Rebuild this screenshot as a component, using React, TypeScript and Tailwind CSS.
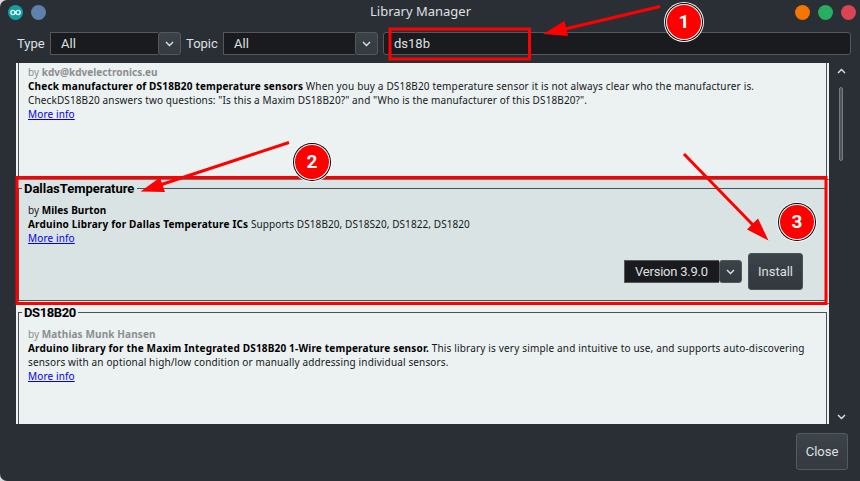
import React from "react";

const NOTO = "font-['Noto_Sans',sans-serif]";
const ROBOTO = "font-[Roboto,sans-serif]";

function Chevron({ up = false }: { up?: boolean }) {
  return (
    <svg width="9" height="6" viewBox="0 0 9 6" fill="none" stroke="#dfe3e5" strokeWidth="1.4">
      <path d={up ? "M1 5 4.5 1.5 8 5" : "M1 1 4.5 4.5 8 1"} />
    </svg>
  );
}

function Select({ value, box, pad }: { value: string; box: string; pad: string }) {
  return (
    <div className={`flex h-[23px] ${box}`}>
      <div className={`flex min-w-0 flex-1 items-center border border-r-0 border-[#54585b] bg-[#1a1b1e] text-[13px] text-[#dfe0e1] ${pad}`}>
        {value}
      </div>
      <div className="flex w-[23px] items-center justify-center rounded-[3px] border border-[#54585b] bg-linear-to-b from-[#3b4248] to-[#343b40]">
        <Chevron />
      </div>
    </div>
  );
}

function MoreInfo() {
  return (
    <div>
      <a className="tracking-[0.13px] text-[#0000ee] underline underline-offset-[1px]">More info</a>
    </div>
  );
}

function Entry({ title, shade, titleWidth, children }: { title: string; shade: string; titleWidth: string; children: React.ReactNode }) {
  return (
    <div className="h-full border border-[#4c5052] pl-[9px]">
      <div className={`-mt-[8px] -ml-[6px] h-4 whitespace-nowrap pl-[2px] text-[13px] leading-4 font-bold text-black ${titleWidth} ${shade} ${ROBOTO}`}>
        {title}
      </div>
      <div className="h-[6px]" />
      {children}
    </div>
  );
}

function Badge({ n, place }: { n: number; place: string }) {
  return (
    <div className={`absolute size-[40px] rounded-full bg-[#f4f4f4] p-px ${place}`}>
      <div className="size-full rounded-full bg-black p-px">
        <div className="size-full rounded-full bg-white p-px">
          <div className={`flex size-full items-center justify-center rounded-full bg-[#fe0000] text-[19px] font-bold text-white ${ROBOTO}`}>{n}</div>
        </div>
      </div>
    </div>
  );
}

export default function App() {
  return (
    <div className="h-[481px] w-[860px] bg-[#d9dcdd]">
      <div className={`relative flex h-full flex-col overflow-hidden rounded-l-[7px] bg-[#2a2e35] text-[13px] text-[#dfe0e1] ${ROBOTO}`}>
        <div className="flex h-8 shrink-0 items-center pr-[4px] pb-[7px] pl-[8px]">
          <div className="flex w-[54px] items-center gap-2">
            <svg width="15" height="15" viewBox="0 0 15 15">
              <circle cx="7.5" cy="7.5" r="7.5" fill="#11a0a5" />
              <g fill="none" stroke="#e9fbfb" strokeWidth="1.3">
                <circle cx="4.9" cy="7.5" r="2.1" />
                <circle cx="10.1" cy="7.5" r="2.1" />
                <path d="M6.5 6.2 8.5 8.8M6.5 8.8 8.5 6.2" />
              </g>
            </svg>
            <div className="size-[15px] rounded-full bg-[#5d80ad]" />
          </div>
          <div className={`flex-1 pr-[16px] pb-[2px] text-center text-[13px] text-[#dfe0e1] ${NOTO}`}>Library Manager</div>
          <div className="flex gap-2">
            <div className="size-[15px] rounded-full bg-[#f67400]" />
            <div className="size-[15px] rounded-full bg-[#27ae60]" />
            <div className="size-[15px] rounded-full bg-[#da4453]" />
          </div>
        </div>

        <div className="flex h-[31px] shrink-0 items-start pl-[17px]">
          <span className="w-[33px] leading-[23px]">Type</span>
          <Select value="All" box="w-[131px]" pad="pl-[10px]" />
          <span className="w-[42px] pl-[5px] leading-[23px]">Topic</span>
          <Select value="All" box="w-[155px]" pad="pl-[10px]" />
          <div className="ml-[5px] flex h-[23px] w-[468px] items-center rounded-[3px] border border-[#54585b] bg-[#1a1b1e] pl-[10px]">
            ds18b
          </div>
        </div>

        <div className="flex h-[361px] shrink-0 pl-4">
          <div className={`w-[813px] overflow-hidden bg-[#ecf1f1] text-[10px] leading-[14px] whitespace-nowrap text-[#15181a] ${NOTO}`}>
            <div className="h-[116px] pr-[2px] pl-[2px]">
              <div className="h-full border-x border-[#4c5052] pt-[2px] pl-[9px]">
                <div className="text-[#8b8e8f]">by <b className="tracking-[0.03px]">kdv@kdvelectronics.eu</b></div>
                <div className="tracking-[0.165px]"><b className="text-black">Check manufacturer of DS18B20 temperature sensors</b> When you buy a DS18B20 temperature sensor it is not always clear who the manufacturer is.</div>
                <div className="tracking-[0.12px]">CheckDS18B20 answers two questions: "Is this a Maxim DS18B20?" and "Who is the manufacturer of this DS18B20?".</div>
                <MoreInfo />
              </div>
            </div>

            <div className="h-[125px] border-y border-[#737779] bg-[#dae3e3] px-[2px] pt-[8px] pb-[2px]">
              <Entry title="DallasTemperature" shade="bg-[#dae3e3]" titleWidth="w-[115px] tracking-[-0.03px]">
                <div>by <b className="tracking-[0.08px] text-black">Miles Burton</b></div>
                <div className="tracking-[0.08px]"><b className="tracking-[0.18px] text-black">Arduino Library for Dallas Temperature ICs</b> Supports DS18B20, DS18S20, DS1822, DS1820</div>
                <MoreInfo />
                <div className={`mt-[8px] flex items-center justify-end gap-[6px] pr-[23px] text-[13px] ${ROBOTO}`}>
                  <Select value="Version 3.9.0" box="w-[118px]" pad="pl-[10px] tracking-[-0.22px]" />
                  <div className="flex h-[37px] w-[55px] items-center justify-center rounded-[3px] border border-[#4b5257] bg-linear-to-b from-[#3c4349] to-[#32383d] text-[#dfe0e1]">Install</div>
                </div>
              </Entry>
            </div>

            <div className="h-[140px] px-[2px] pt-[8px]">
              <Entry title="DS18B20" shade="bg-[#ecf1f1]" titleWidth="w-[56px] tracking-[-0.4px]">
                <div className="text-[#8b8e8f]">by <b className="tracking-[0.12px]">Mathias Munk Hansen</b></div>
                <div className="tracking-[0.17px]"><b className="tracking-[0.18px] text-black">Arduino library for the Maxim Integrated DS18B20 1-Wire temperature sensor.</b> This library is very simple and intuitive to use, and supports auto-discovering</div>
                <div className="tracking-[0.14px]">sensors with an optional high/low condition or manually addressing individual sensors.</div>
                <MoreInfo />
              </Entry>
            </div>
          </div>
          <div className="flex w-[25px] flex-col items-center pt-[5px] pb-[4px]">
            <Chevron up />
            <div className="mt-[13px] mr-px h-[74px] w-[4px] rounded-full border border-[#777b7e] bg-[#505458]" />
            <div className="flex-1" />
            <Chevron />
          </div>
        </div>

        <div className="flex justify-end pt-[9px] pr-[12px]">
          <div className="flex h-[37px] w-[52px] items-center justify-center rounded-[3px] border border-[#565b5f] bg-linear-to-b from-[#3c4349] to-[#343a3f]">Close</div>
        </div>

        <svg className="absolute inset-0" width="860" height="481" viewBox="0 0 860 481">
          <g fill="none" stroke="#fe0000" strokeWidth="3">
            <rect x="390" y="29" width="139.500" height="30" />
            <rect x="17" y="177.500" width="809" height="126" />
            <path d="M660 6.500 565 29M289 142.500 160 185M684 154 753 225" />
          </g>
          <g fill="#fe0000">
            <path d="M543 34 564.500 21 568 36Z" />
            <path d="M140.500 191.500 160 177.500 165 192Z" />
            <path d="M768.500 240.500 747 229.500 758 218.500Z" />
          </g>
        </svg>
        <Badge n={1} place="top-[2px] left-[664px]" />
        <Badge n={2} place="top-[142px] left-[292px]" />
        <Badge n={3} place="top-[202px] left-[777px]" />
      </div>
    </div>
  );
}
